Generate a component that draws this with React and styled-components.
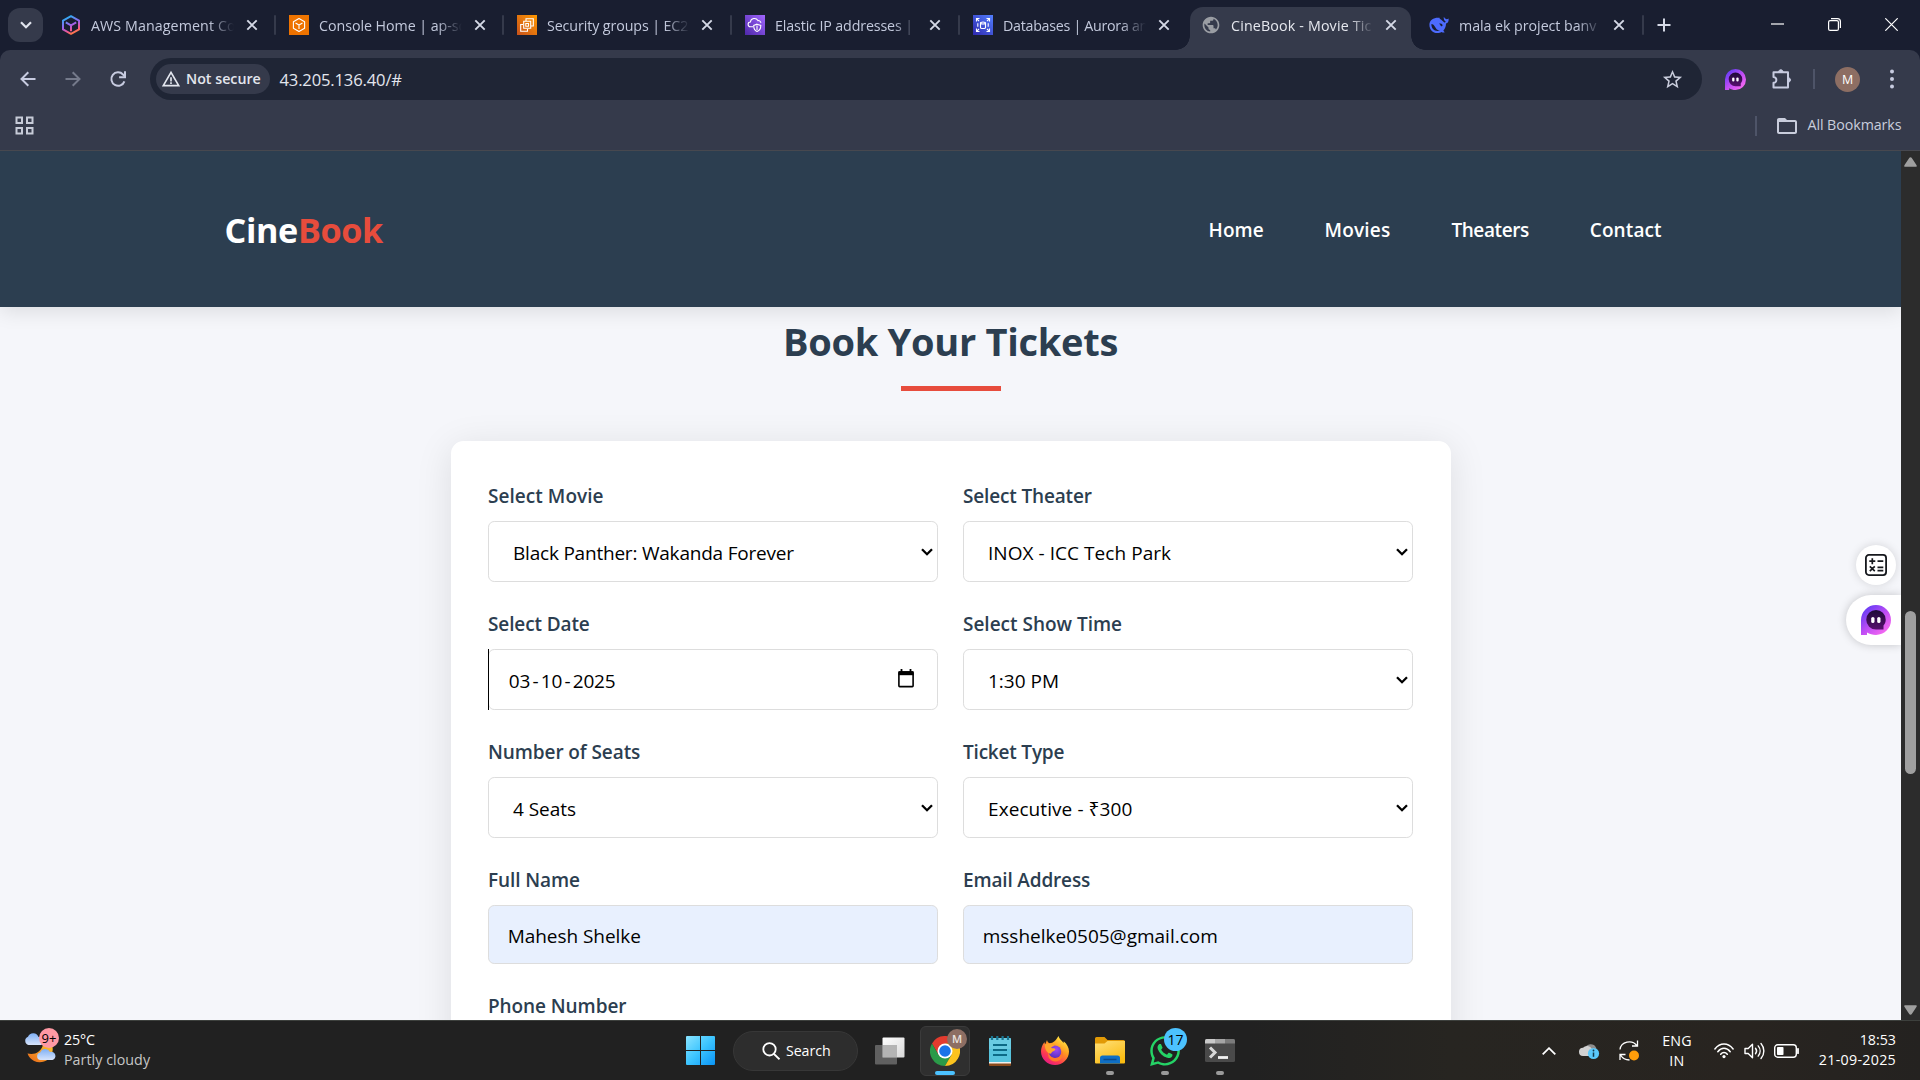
import React from "react";
import styled, { createGlobalStyle, css } from "styled-components";
import {
  MdPublic,
  MdStarBorder,
  MdWarningAmber,
  MdFolderOpen,
} from "react-icons/md";
import { FaWhatsapp } from "react-icons/fa";

const Global = createGlobalStyle`
  *, *::before, *::after { box-sizing: border-box; }
  body {
    margin: 0;
    width: 1920px;
    height: 1080px;
    overflow: hidden;
    font-family: "Open Sans", "Noto Sans", sans-serif;
    background: #191e30;
  }
  svg { display: block; flex: none; }
`;

const Screen = styled.div`
  width: 1920px;
  height: 1080px;
  display: flex;
  flex-direction: column;
`;

/* Every piece of copy can be tracked slightly tighter or looser. */
const Copy = styled.span`
  letter-spacing: ${(p) => p.$ls || 0}px;
  white-space: pre;
`;

/* ---------- Tab strip ---------- */

const TabStrip = styled.div`
  height: 50px;
  background: #191e30;
  display: flex;
  padding-left: 8px;
`;

const TabSearch = styled.div`
  width: 35px;
  height: 34px;
  margin: 8px 5px 0 0;
  border-radius: 12px;
  background: #353a4b;
  display: grid;
  place-items: center;
`;

const TabItem = styled.div`
  position: relative;
  width: 228px;
  height: 50px;
  display: flex;
  align-items: center;
  padding-left: 13px;
  color: ${(p) => (p.$active ? "#e6e8ef" : "#c3c9dc")};
  z-index: 0;

  ${(p) =>
    p.$active &&
    css`
      &::before {
        content: "";
        position: absolute;
        z-index: -1;
        left: 2px;
        right: 5px;
        top: 7px;
        bottom: 0;
        border-radius: 13px 13px 0 0;
        background: #353a4b;
      }
      &::after {
        content: "";
        position: absolute;
        z-index: -1;
        left: -12px;
        right: -9px;
        bottom: 0;
        height: 14px;
        background:
          radial-gradient(circle at 0 0, transparent 13.5px, #353a4b 14px) left / 14px 14px no-repeat,
          radial-gradient(circle at 100% 0, transparent 13.5px, #353a4b 14px) right / 14px 14px no-repeat;
      }
    `}
`;

const TabTitle = styled.div`
  width: 144px;
  margin: 1px 0 0 10px;
  font-size: 14.25px;
  line-height: 22px;
  mask-image: linear-gradient(90deg, #000 118px, transparent 143px);
`;

const TabClose = styled.div`
  width: 20px;
  margin-left: 7px;
  display: grid;
  place-items: center;
`;

const TabDivider = styled.div`
  width: 2px;
  height: 20px;
  margin-left: 13px;
  border-radius: 1px;
  background: ${(p) => (p.$hidden ? "transparent" : "#353a4b")};
`;

const NewTab = styled.div`
  width: 24px;
  display: grid;
  place-items: center;
  margin-left: 8px;
`;

const WindowButtons = styled.div`
  margin-left: auto;
  display: flex;
`;

const WindowButton = styled.div`
  width: 57px;
  height: 49px;
  display: grid;
  place-items: center;
`;

/* ---------- Toolbar ---------- */

const ToolArea = styled.div`
  height: 101px;
  background: #353a4b;
  border-radius: 10px 10px 0 0;
  border-bottom: 1px solid #47484f;
`;

const Toolbar = styled.div`
  height: 58px;
  padding-left: 5px;
  display: flex;
  align-items: center;
`;

const NavButton = styled.div`
  width: 45px;
  display: grid;
  place-items: center;
`;

const Omnibox = styled.div`
  width: 1552px;
  height: 42px;
  margin-left: 10px;
  border-radius: 21px;
  background: #1f2535;
  display: flex;
  align-items: center;
  padding: 0 18px 0 6px;
`;

const SecurityChip = styled.div`
  width: 114px;
  height: 30px;
  border-radius: 15px;
  background: #353a4b;
  display: flex;
  align-items: center;
  gap: 5px;
  padding-left: 5px;
  font-size: 14.25px;
  line-height: 20px;
  font-weight: 600;
  color: #e3e6ee;
`;

const Address = styled.div`
  flex: 1;
  margin: 1px 0 0 9.5px;
  font-size: 16.6px;
  line-height: 24px;
  color: #e3e6ee;
`;

const ToolIcons = styled.div`
  display: flex;
  align-items: center;
  padding-left: 23px;
`;

const PuzzleSlot = styled.div`
  margin: 0 20px 0 25px;
`;

const ToolDivider = styled.div`
  width: 2px;
  height: 20px;
  margin-right: 20px;
  background: #4e5468;
`;

const Avatar = styled.div`
  width: 25px;
  height: 25px;
  border-radius: 50%;
  background: #8d6e63;
  color: #fff;
  font-size: 12.5px;
  line-height: 25px;
  text-align: center;
  margin-right: 26px;
`;

const Bookmarks = styled.div`
  height: 35px;
  display: flex;
  align-items: center;
  padding: 0 18.5px 0 15px;
  color: #c9cddc;
`;

const BookmarkDivider = styled.div`
  width: 2px;
  height: 20px;
  margin: 0 18px 0 auto;
  background: #4e5468;
`;

const BookmarkLabel = styled.div`
  margin: -2px 0 0 8px;
  font-size: 14.25px;
  line-height: 20px;
`;

/* ---------- Page ---------- */

const Viewport = styled.div`
  height: 869px;
  display: flex;
  overflow: hidden;
`;

const Page = styled.div`
  position: relative;
  width: 1901px;
  height: 869px;
  overflow: hidden;
  background: #f5f6fa;
`;

const SiteHeader = styled.header`
  height: 156px;
  background: #2c3e50;
  box-shadow: 0 5px 18.75px rgba(0, 0, 0, 0.1);
  display: flex;
  align-items: center;
  justify-content: space-between;
  padding: 1px 222px 0 224.5px;
`;

const Logo = styled.div`
  font-size: 34.2px;
  line-height: 50px;
  font-weight: 700;
  color: #fff;
`;

const LogoAccent = styled.span`
  color: #e74c3c;
  letter-spacing: -0.4px;
`;

const SiteNav = styled.nav`
  width: 470.5px;
  display: grid;
  grid-template-columns: 116px 126.9px 138.4px auto;
  font-size: 19px;
  font-weight: 600;
  color: #fff;
`;

const Heading = styled.h2`
  margin: 2px 0 12px;
  font-size: 38px;
  line-height: 65px;
  font-weight: 700;
  text-align: center;
  color: #2c3e50;
`;

const HeadingRule = styled.div`
  width: 100px;
  height: 5px;
  margin: 0 auto 50px;
  background: #e74c3c;
`;

const Card = styled.form`
  width: 1000px;
  height: 760px;
  margin: 0 auto;
  padding: 38px 37.5px;
  border-radius: 12.5px;
  background: #fff;
  box-shadow: 0 6.25px 37.5px rgba(0, 0, 0, 0.1);
  display: grid;
  grid-template-columns: 450px 450px;
  column-gap: 25px;
  row-gap: 25px;
  align-content: start;
`;

const Group = styled.div`
  display: flex;
  flex-direction: column;
  gap: 10px;
`;

const Label = styled.label`
  height: 32px;
  font-size: 19px;
  line-height: 34px;
  font-weight: 600;
  color: #2c3e50;
`;

const Control = styled.div`
  position: relative;
  height: ${(p) => (p.$filled ? 59 : 61)}px;
  padding: ${(p) => (p.$select ? "2px 4px 0 24px" : p.$filled ? "2px 4px 0 18.7px" : "2px 4px 0 19.700px")};
  border: 1px solid #ddd;
  border-radius: 6.25px;
  background: ${(p) => (p.$filled ? "#e8f0fe" : "#fff")};
  display: flex;
  align-items: center;
  font-size: 19px;
  line-height: 28px;
  color: #000;
`;

const ControlIcon = styled.div`
  margin: ${(p) => (p.$date ? "-5px 19px 0 auto" : "-2px 0 0 auto")};
`;

const DateDash = styled.span`
  width: 10.3px;
  text-align: center;
`;

const FocusCaret = styled.span`
  position: absolute;
  left: -1px;
  top: -1px;
  width: 1px;
  height: 61px;
  background: #000;
`;

const FloatingTools = styled.div`
  position: absolute;
  right: 0;
  top: 394px;
  display: flex;
  flex-direction: column;
  align-items: flex-end;
  gap: 10px;
`;

const CalcBubble = styled.div`
  width: 40px;
  height: 40px;
  margin-right: 5px;
  border-radius: 50%;
  background: #fff;
  box-shadow: 0 0 10px rgba(0, 0, 0, 0.14);
  display: grid;
  place-items: center;
`;

const AssistantTab = styled.div`
  width: 55px;
  height: 50px;
  padding-left: 15px;
  border-radius: 25px 0 0 25px;
  background: #fff;
  box-shadow: 0 0 10px rgba(0, 0, 0, 0.2);
  display: flex;
  align-items: center;
`;

const Scrollbar = styled.div`
  width: 19px;
  background: #2c2c2c;
  display: flex;
  flex-direction: column;
  align-items: center;
  padding: 6px 0 5px;
`;

const ScrollThumb = styled.div`
  width: 11px;
  height: 163px;
  margin: 444px 0 auto;
  border-radius: 6px;
  background: #9f9f9f;
`;

/* ---------- Taskbar ---------- */

const Taskbar = styled.footer`
  height: 60px;
  border-top: 1px solid #3d403d;
  background: linear-gradient(90deg, #212121 0, #212121 1250px, #272521 1450px, #282420 1750px, #242220);
  display: flex;
  align-items: center;
`;

const Weather = styled.div`
  width: 675px;
  padding-left: 24px;
  display: flex;
  align-items: center;
`;

const WeatherIcon = styled.div`
  position: relative;
  width: 40px;
  height: 40px;
`;

const NewsBadge = styled.span`
  position: absolute;
  left: 15px;
  top: -3px;
  width: 20px;
  height: 20px;
  border-radius: 50%;
  background: #ff99a4;
  color: #000;
  font-size: 13px;
  line-height: 20px;
  text-align: center;
`;

const TwoLines = styled.div`
  display: flex;
  flex-direction: column;
  margin-top: ${(p) => (p.$raised ? -2 : 0)}px;
  font-size: 14.25px;
  line-height: 20px;
  color: #fff;
  align-items: ${(p) => p.$align || "flex-start"};
`;

const Muted = styled(Copy)`
  color: #c6c6c6;
`;

const TaskButton = styled.div`
  position: relative;
  width: 50px;
  height: 50px;
  margin-right: ${(p) => p.$after ?? 5}px;
  border-radius: 6px;
  border: 1px solid ${(p) => (p.$active ? "#3b3b3b" : "transparent")};
  background: ${(p) => (p.$active ? "#2f2f2f" : "transparent")};
  display: grid;
  place-items: center;
`;

const RunMark = styled.span`
  position: absolute;
  left: 50%;
  bottom: 0;
  translate: -50% 0;
  width: ${(p) => (p.$active ? 20 : 8)}px;
  height: 4px;
  border-radius: 2px;
  background: ${(p) => (p.$active ? "#4cc2ff" : "#9a9a9a")};
`;

const CountBadge = styled.span`
  position: absolute;
  right: 2px;
  top: 1px;
  width: 23px;
  height: 23px;
  border-radius: 50%;
  background: #4cc2ff;
  color: #000;
  font-size: 14px;
  line-height: 23px;
  text-align: center;
`;

const ProfileBadge = styled.span`
  position: absolute;
  right: 2px;
  top: 2px;
  width: 20px;
  height: 20px;
  border-radius: 50%;
  background: #8d6e63;
  color: #e9e2df;
  font-size: 11px;
  font-weight: 600;
  line-height: 20px;
  text-align: center;
`;

const SearchPill = styled.div`
  width: 125px;
  height: 40px;
  margin-right: 7px;
  padding-left: 28px;
  border-radius: 20px;
  border: 1px solid #373737;
  background: #2d2d2d;
  display: flex;
  align-items: center;
  gap: 6px;
  color: #fff;
  font-size: 14.25px;
  line-height: 20px;
`;

const Tray = styled.div`
  margin-left: auto;
  padding-right: 24px;
  display: flex;
  align-items: center;
`;

const TrayCell = styled.div`
  width: ${(p) => p.$w}px;
  display: grid;
  place-items: center;
`;

const Clock = styled.div`
  width: 88px;
`;

/* ---------- Icons ---------- */

const Cross = ({ color = "#d5d9e6" }) => (
  <svg width="12" height="12" viewBox="0 0 12 12" stroke={color} strokeWidth="1.9">
    <path d="M1.3 1.3 10.7 10.7M10.7 1.3 1.3 10.7" />
  </svg>
);

const AwsCube = () => (
  <svg width="20" height="20" viewBox="0 0 20 20" fill="none" strokeWidth="2" strokeLinejoin="round">
    <defs>
      <linearGradient id="cube" x1="0.2" y1="0" x2="0.6" y2="1">
        <stop offset="0" stopColor="#1fb6f2" />
        <stop offset="0.5" stopColor="#9a62f0" />
        <stop offset="0.8" stopColor="#f0568f" />
        <stop offset="1" stopColor="#ff7a45" />
      </linearGradient>
    </defs>
    <path stroke="url(#cube)" d="M10 1.2 18 5.6v8.8L10 18.8 2 14.4V5.6ZM4.8 7.4 10 10.3l5.2-2.9M10 10.3v6" />
  </svg>
);

const Tile = ({ id, from, to, children }) => (
  <svg width="20" height="20" viewBox="0 0 20 20" fill="none" stroke="#fff" strokeWidth="1.1">
    <defs>
      <linearGradient id={id} x1="0" y1="1" x2="1" y2="0">
        <stop offset="0" stopColor={from} />
        <stop offset="1" stopColor={to} />
      </linearGradient>
    </defs>
    <rect width="20" height="20" fill={`url(#${id})`} stroke="none" />
    {children}
  </svg>
);

const ConsoleIcon = () => (
  <Tile id="tile-console" from="#ed7100" to="#f07600">
    <path d="M10 3.6 15.6 6.8v6.4L10 16.4 4.4 13.2V6.8ZM6.5 8 10 10l3.5-2M10 10v4" strokeLinejoin="round" />
  </Tile>
);

const Ec2Icon = () => (
  <Tile id="tile-ec2" from="#c8511b" to="#ff9900">
    <path d="M9 6V3.700h7.300V11H14M6.700 6.300h7v7h-7ZM8.800 8.500h2.700v2.700H8.800ZM6 9.500H3.700v6.800h6.800V14" />
  </Tile>
);

const VpcIcon = () => (
  <Tile id="tile-vpc" from="#4d27a8" to="#a166ff">
    <path d="M8 11.8H5.6a2.4 2.4 0 0 1-.2-4.800 4 4 0 0 1 7.500-1.400 2.600 2.600 0 0 1 3 2.300M12 9.200l3.800 1.200c0 3.300-1 5-3.800 6.100-2.500-1.100-3.300-3-3.300-6.100ZM12 10.500v4.500" />
  </Tile>
);

const RdsIcon = () => (
  <Tile id="tile-rds" from="#2e27ad" to="#527fff">
    <path d="M3.500 6.500v-3h3M13.500 3.500h3v3M16.500 13.500v3h-3M6.500 16.500h-3v-3M3.800 3.800l2.200 2.200M16.200 3.800 14 6M16.200 16.200 14 14M3.800 16.200 6 14" />
    <path d="M7.500 8v4.500c0 1.400 5 1.400 5 0V8M4.800 8.200v3.600M15.200 8.200v3.600" />
    <ellipse cx="10" cy="8" rx="2.500" ry="1" />
  </Tile>
);

const WhaleIcon = () => (
  <svg width="20" height="20" viewBox="0 0 20 20" fill="#4d6bfe">
    <path
      fillRule="evenodd"
      d="M19.600 3.400c-1 .9-2.400 1-3.300.2-.7-.6-.9-1.300-1.500-1.600-.3 1.600.2 3.600 1.900 4.500-.4.900-1 1.200-1.700.7C13.500 6.200 12.600 4.500 10.900 4c-.5-.3-.4-.8.2-1.100C6 1.900.400 4.600.400 9.700c0 4.900 3.300 8.300 8 8.300 1.700 0 3-.4 4.100-1.100 1.100.6 2.600.7 3.100.3.1-.3-.6-.7-1.300-1.500 1.900-2 2.700-4.400 2.700-7.100 1.900-.6 2.900-2.400 2.600-5.200ZM10.600 15.300c-2.400.2-3.600-1.800-5-4.100C4.700 9.700 3.600 8.900 2.400 8.900c-.1 4 2.300 7 6.300 7 1 0 1.900-.2 1.900-.6Zm2.700-4.400c-.8.8-1.700.1-1.800-.7-.2-.7-.6-1.100-1.400-1.500 1.200-.6 2.600-.2 3.200.7.3.500.3 1.100 0 1.500Z"
    />
  </svg>
);

const BackArrow = ({ color, flip }) => (
  <svg width="16" height="16" viewBox="0 0 16 16" fill="none" stroke={color} strokeWidth="2" transform={flip ? "scale(-1 1)" : undefined}>
    <path d="M15.500 8H1.800M8.300 1.200 1.500 8l6.800 6.800" />
  </svg>
);

const Reload = () => (
  <svg width="18" height="18" viewBox="0 0 18 18" fill="none" stroke="#c7cbe0" strokeWidth="2">
    <path d="M15.400 11.300A6.700 6.700 0 1 1 14 4.500L16 6.500" />
    <path d="M16 1.300v5.900h-5.900" />
  </svg>
);

const Assistant = ({ size, id }) => (
  <svg width={size} height={size} viewBox="0 0 30 30">
    <defs>
      <linearGradient id={id} x1="0" y1="0.100" x2="0.800" y2="1">
        <stop offset="0.100" stopColor="#6b3df5" />
        <stop offset="0.550" stopColor="#c04df5" />
        <stop offset="1" stopColor="#fb6cf0" />
      </linearGradient>
      <linearGradient id={`${id}-in`} x1="0" y1="0" x2="0" y2="1">
        <stop offset="0" stopColor="#1d0a38" />
        <stop offset="1" stopColor="#58106e" />
      </linearGradient>
    </defs>
    <path fill={`url(#${id})`} d="M0 30V15A15 15 0 1 1 15 30c-3.500 0-6.500-.900-9-2.500V30Z" />
    <path fill={`url(#${id}-in)`} d="M15 5a9.700 9.700 0 0 1 9.700 9.700c0 2.300-.900 4.200-2.200 5.800v4H15A9.700 9.700 0 0 1 15 5Z" />
    <rect x="10.200" y="12" width="3.300" height="6" rx="1.600" fill="#fff" />
    <rect x="16.200" y="12" width="3.300" height="6" rx="1.600" fill="#fff" />
  </svg>
);

const Puzzle = () => (
  <svg width="22" height="22" viewBox="0 0 22 22" fill="none" stroke="#c7cbe0" strokeWidth="2" strokeLinejoin="round">
    <path d="M2.500 4.300H17v15.200H2.500v-4.700c3.200.500 4.300-5.400 0-5.800Z" />
    <path d="M7.500 4.300c0-3.400 4.700-3.400 4.700 0ZM17 9.700c3.400 0 3.400 4.500 0 4.500Z" fill="#c7cbe0" strokeWidth="1" />
  </svg>
);

const AppsGrid = () => (
  <svg width="19" height="19" viewBox="0 0 19 19" fill="none" stroke="#c7cbd8" strokeWidth="2">
    <path d="M1.500 1.500h5.500v5.500h-5.500ZM12 1.500h5.500v5.500H12ZM1.500 12h5.500v5.500h-5.500ZM12 12h5.500v5.500H12Z" />
  </svg>
);

const SelectArrow = () => (
  <svg width="12" height="8" viewBox="0 0 12 8" fill="none" stroke="#000" strokeWidth="2.300">
    <path d="M1 1.200 6 6.200l5-5" />
  </svg>
);

const Calendar = () => (
  <svg width="16" height="19" viewBox="0 0 16 19" fill="none" stroke="#000">
    <rect x="0.900" y="3" width="14.200" height="14.600" rx="0.800" strokeWidth="1.600" />
    <path d="M.5 4.200h15" strokeWidth="4" />
    <path d="M3.500 0v3M12.500 0v3" strokeWidth="1.800" />
  </svg>
);

const CalcIcon = () => (
  <svg width="22" height="22" viewBox="0 0 22 22" fill="none" stroke="#16181d" strokeWidth="1.700">
    <rect x="0.900" y="0.900" width="20.200" height="20.200" rx="3" strokeWidth="1.800" />
    <path d="M4.300 7.200h6M7.300 4.200v6M12.500 7.200h5.800M4.800 12.300l5 4.800M9.800 12.300l-5 4.800M12.500 13.300h5.800M12.500 16.600h5.800" />
  </svg>
);

const ScrollArrow = ({ down }) => (
  <svg width="13" height="10" viewBox="0 0 13 10" fill="#9f9f9f" transform={down ? "scale(1 -1)" : undefined}>
    <path d="M5.200 1c.6-1 2-1 2.600 0l4.800 7.200c.4.900.1 1.600-.8 1.600H1.200c-.9 0-1.200-.7-.8-1.600Z" />
  </svg>
);

const CloudMoon = () => (
  <svg width="36" height="32" viewBox="0 0 36 32">
    <defs>
      <linearGradient id="cloud" x1="0" y1="0" x2="0" y2="1">
        <stop offset="0" stopColor="#7fb0f5" />
        <stop offset="1" stopColor="#d7e4fb" />
      </linearGradient>
      <linearGradient id="moon" x1="1" y1="0" x2="0" y2="1">
        <stop offset="0" stopColor="#ffc52e" />
        <stop offset="1" stopColor="#e8661a" />
      </linearGradient>
    </defs>
    <path fill="url(#cloud)" d="M4.500 14A4.300 4.300 0 0 1 4 5.800 5.600 5.600 0 0 1 14.500 6 4 4 0 0 1 17 14Z" />
    <path fill="url(#moon)" d="M28 14a12.500 12.500 0 0 1-24.500 8.500c7 1.700 13-1 15.500-8.500Z" />
    <path fill="url(#cloud)" d="M16.500 29a3.800 3.800 0 0 1-.3-7.500A5.400 5.400 0 0 1 26 21a4 4 0 0 1 2.500 8Z" />
  </svg>
);

const WindowsLogo = () => (
  <svg width="29" height="29" viewBox="0 0 29 29">
    <defs>
      <linearGradient id="win" x1="0" y1="0" x2="1" y2="1">
        <stop offset="0" stopColor="#8ae4ff" />
        <stop offset="0.500" stopColor="#3cc4ff" />
        <stop offset="1" stopColor="#0a94f5" />
      </linearGradient>
    </defs>
    <path fill="url(#win)" d="M1 0h13v14H0V1q0-1 1-1ZM15 0h13q1 0 1 1v13H15ZM0 15h14v14H1q-1 0-1-1ZM15 15h14v13q0 1-1 1H15Z" />
  </svg>
);

const TaskView = () => (
  <svg width="30" height="28" viewBox="0 0 30 28">
    <defs>
      <linearGradient id="tv" x1="0" y1="0" x2="1" y2="1">
        <stop offset="0" stopColor="#fff" />
        <stop offset="1" stopColor="#d9d9d9" />
      </linearGradient>
    </defs>
    <rect x="7.500" y="0.500" width="22" height="20" rx="1" fill="url(#tv)" />
    <rect x="0" y="8" width="22" height="19.500" rx="1" fill="#6b6b6b" fillOpacity="0.850" />
    <path d="M7.500 8H22v12.500H7.500Z" fill="#b4b4b4" />
  </svg>
);

const Chrome = () => (
  <svg width="30" height="30" viewBox="0 0 48 48">
    <path fill="#e33b2e" d="M3.200 12A24 24 0 0 1 44.800 12H24L13.600 30Z" />
    <path fill="#2a9a48" d="M3.200 12 13.600 30h20.800L24 48A24 24 0 0 1 3.200 12Z" />
    <path fill="#fcc31e" d="M44.800 12A24 24 0 0 1 24 48L34.400 30 24 12Z" />
    <circle cx="24" cy="24" r="12" fill="#fff" />
    <circle cx="24" cy="24" r="9.300" fill="#1a73e8" />
  </svg>
);

const Notepad = () => (
  <svg width="22" height="30" viewBox="0 0 22 30">
    <rect y="25" width="22" height="5" rx="1" fill="#8a4a1c" />
    <rect y="24" width="22" height="3.500" fill="#f1eeea" />
    <path d="M0 3q0-1 1-1h20q1 0 1 1v23H0Z" fill="#56c3dd" />
    <path d="M0 3q0-1 1-1h20q1 0 1 1v10H0Z" fill="#7bd6ea" fillOpacity="0.500" />
    <path d="M4 9h14M4 14h14M4 19h14" stroke="#0c6a86" strokeWidth="1.800" />
    <path d="M3 0v4M8.300 0v4M13.600 0v4M19 0v4" stroke="#1b7793" strokeWidth="2.200" />
  </svg>
);

const Firefox = () => (
  <svg width="28" height="29" viewBox="0 0 28 29">
    <defs>
      <linearGradient id="fx" x1="0.850" y1="0.050" x2="0.250" y2="1">
        <stop offset="0" stopColor="#fff04a" />
        <stop offset="0.400" stopColor="#ff9a1f" />
        <stop offset="0.750" stopColor="#ff3a50" />
        <stop offset="1" stopColor="#e2178a" />
      </linearGradient>
      <radialGradient id="fxg" cx="0.600" cy="0.300" r="0.700">
        <stop offset="0" stopColor="#a04bf5" />
        <stop offset="1" stopColor="#5a2fc0" />
      </radialGradient>
    </defs>
    <path fill="url(#fx)" d="M17.500 0c.6 3 3.500 4.500 5 7 .3-.6.300-1.200.2-1.700C26.200 8.300 28 12 28 15.500 28 23 21.800 29 14 29S0 23 0 15.500C0 11.800 1.300 8.600 3.600 5.900c0 1 .1 1.700.6 2.300L6 4c.4 1.700 1.200 2.800 2.600 3.300C12.500 7 14.800 4.500 17.500 0Z" />
    <circle cx="14" cy="15.800" r="6.300" fill="url(#fxg)" />
    <path fill="#ffa62b" d="M3.800 8.500c3-1.500 6.500-1.300 9.700 1.400-1.900.1-3 1-3.300 2.200 2 .3 4 .2 4.300 1.300-.4 1.300-2.600 1.700-3.800 2.900-.3 2-1.600 1.500-3.500.8C4.400 14.500 3.800 11.500 3.800 8.500Z" />
    <path fill="#ff7a2a" d="M20.500 14c1.200 5-3 9-8 7.800-2.500-.6-4.300-2.500-5-5-1.600 4.500 2.500 9.200 7.500 8.700 6-.6 8.500-7 5.500-11.500Z" />
  </svg>
);

const Explorer = () => (
  <svg width="30" height="27" viewBox="0 0 30 27">
    <defs>
      <linearGradient id="fold" x1="0" y1="0" x2="0.600" y2="1">
        <stop offset="0" stopColor="#ffe07a" />
        <stop offset="1" stopColor="#fbbc12" />
      </linearGradient>
    </defs>
    <path fill="#e29a06" d="M0 1.500Q0 0 1.500 0h8l3 3H28.500Q30 3 30 4.500V12H0Z" />
    <path fill="url(#fold)" d="M0 6.500h9.500l3-2.500H30v21.500q0 1-1 1H1q-1 0-1-1Z" />
    <path fill="#0f6fc5" d="M5 21q0-2.500 2.500-2.500h15Q25 18.500 25 21v5.500H5Z" />
    <path d="M8.500 22.500h13" stroke="#0a4a8e" strokeWidth="1.500" />
  </svg>
);

const Terminal = () => (
  <svg width="30" height="23" viewBox="0 0 30 23">
    <rect width="30" height="23" rx="1.500" fill="#4a4a4a" />
    <path d="M0 4.500V1.500Q0 0 1.500 0h8.500v4.500H0Z" fill="#c9c9c9" />
    <path d="M10 0h10v4.500H10Z" fill="#a5a5a5" />
    <path d="M20 0h8.500Q30 0 30 1.500v3H20Z" fill="#7b7b7b" />
    <path d="M5 8.500 10 13.500 5 18.500" fill="none" stroke="#d8d8d8" strokeWidth="3" />
    <path d="M13 18.500h10" stroke="#f2f2f2" strokeWidth="2.800" />
  </svg>
);

const OneDrive = () => (
  <svg width="21" height="18" viewBox="0 0 21 18">
    <path fill="#8e8e8e" d="M6 6.500a6 6 0 0 1 11-1l2 6H9Z" />
    <path fill="#d2d2d2" d="M4.200 14A4.100 4.100 0 0 1 4 5.800 5.500 5.500 0 0 1 13 7l4 7Z" />
    <circle cx="14.500" cy="11.500" r="5.600" fill="#5ac8fa" />
    <path d="M14.500 10.500v4.300" stroke="#14384a" strokeWidth="1.500" />
    <circle cx="14.500" cy="8.500" r="0.900" fill="#14384a" />
  </svg>
);

const SyncIcon = () => (
  <svg width="20" height="21" viewBox="0 0 20 21" fill="none" stroke="#fff" strokeWidth="1.300">
    <path d="M1 9.500C2 1.500 13-.8 17.800 5.500M18.500.500v5.500h-5.500M1 20v-5.500h5.500M1.500 15c2 3.300 5 4.900 9 5" />
    <circle cx="15" cy="15.500" r="5" fill="#ff9d0a" stroke="none" />
  </svg>
);

const Wifi = () => (
  <svg width="20" height="16" viewBox="0 0 20 16" fill="none" stroke="#fff" strokeWidth="1.500" strokeLinecap="round">
    <path d="M.9 6C6-.6 14-.6 19.100 6M3.800 8.700c3.500-4.500 8.900-4.500 12.400 0M6.700 11.300c1.900-2.300 4.700-2.300 6.600 0" />
    <circle cx="10" cy="13.600" r="1.600" fill="#fff" stroke="none" />
  </svg>
);

const Volume = () => (
  <svg width="21" height="18" viewBox="0 0 21 18" fill="none" stroke="#fff" strokeWidth="1.400" strokeLinecap="round" strokeLinejoin="round">
    <path d="M1 6.500h3.200L8.500 2.200v13.600L4.200 11.500H1ZM11.500 6.300c1.300 1.600 1.300 3.800 0 5.400M14.200 3.900c2.500 3 2.500 7.200 0 10.200M17 1.500c3.800 4.400 3.800 10.600 0 15" />
  </svg>
);

const Battery = () => (
  <svg width="25" height="14" viewBox="0 0 25 14" fill="none" stroke="#fff" strokeWidth="1.400">
    <rect x="0.700" y="0.800" width="21.600" height="12.400" rx="3" />
    <rect x="3" y="3" width="6.500" height="8" rx="0.800" fill="#fff" stroke="none" />
    <path d="M24 4.800v4.400" strokeWidth="1.800" strokeLinecap="round" />
  </svg>
);

/* ---------- Data ---------- */

const TABS = [
  { title: "AWS Management Co", ls: 0.09, icon: <AwsCube /> },
  { title: "Console Home | ap-so", ls: -0.05, icon: <ConsoleIcon /> },
  { title: "Security groups | EC2", ls: -0.1, icon: <Ec2Icon /> },
  { title: "Elastic IP addresses |", ls: -0.13, icon: <VpcIcon /> },
  { title: "Databases | Aurora an", ls: -0.28, icon: <RdsIcon />, last: true },
  { title: "CineBook - Movie Tic", ls: 0.16, icon: <MdPublic size={20} color="#9a9da3" />, active: true, last: true },
  { title: "mala ek project banv", ls: -0.05, icon: <WhaleIcon /> },
];

const LINKS = [
  ["Home", 0.1],
  ["Movies", 0.2],
  ["Theaters", -0.41],
  ["Contact", 0.1],
];

const FIELDS = [
  { label: "Select Movie", ls: 0.05, value: "Black Panther: Wakanda Forever", vls: -0.21, select: true },
  { label: "Select Theater", ls: -0.16, value: "INOX - ICC Tech Park", vls: 0.05, select: true },
  { label: "Select Date", ls: -0.12, date: ["03", "10", "2025"] },
  { label: "Select Show Time", ls: -0.01, value: "1:30 PM", select: true },
  { label: "Number of Seats", ls: -0.09, value: "4 Seats", vls: -0.04, select: true },
  { label: "Ticket Type", ls: -0.2, value: "Executive - ₹300", vls: 0.08, select: true },
  { label: "Full Name", ls: -0.09, value: "Mahesh Shelke", vls: -0.05, filled: true },
  { label: "Email Address", ls: -0.16, value: "msshelke0505@gmail.com", filled: true },
  { label: "Phone Number", ls: -0.08 },
];

function Tab({ tab }) {
  return (
    <TabItem $active={tab.active}>
      {tab.icon}
      <TabTitle>
        <Copy $ls={tab.ls}>{tab.title}</Copy>
      </TabTitle>
      <TabClose>
        <Cross />
      </TabClose>
      <TabDivider $hidden={tab.last} />
    </TabItem>
  );
}

function Field({ field }) {
  const { label, ls, value, vls, select, filled, date } = field;
  return (
    <Group>
      <Label>
        <Copy $ls={ls}>{label}</Copy>
      </Label>
      {value && (
        <Control $select={select} $filled={filled}>
          <Copy $ls={vls}>{value}</Copy>
          {select && (
            <ControlIcon>
              <SelectArrow />
            </ControlIcon>
          )}
        </Control>
      )}
      {date && (
        <Control>
          <FocusCaret />
          <Copy>{date[0]}</Copy>
          <DateDash>-</DateDash>
          <Copy>{date[1]}</Copy>
          <DateDash>-</DateDash>
          <Copy $ls={-0.2}>{date[2]}</Copy>
          <ControlIcon $date>
            <Calendar />
          </ControlIcon>
        </Control>
      )}
    </Group>
  );
}

export default function App() {
  return (
    <Screen>
      <Global />
      <TabStrip>
        <TabSearch>
          <svg width="12" height="8" viewBox="0 0 12 8" fill="none" stroke="#e1e4ee" strokeWidth="2.200">
            <path d="M1 1.200 6 6.200l5-5" />
          </svg>
        </TabSearch>
        {TABS.map((tab) => (
          <Tab key={tab.title} tab={tab} />
        ))}
        <NewTab>
          <svg width="14" height="14" viewBox="0 0 14 14" stroke="#d5d9e6" strokeWidth="2">
            <path d="M7 .500v13M.500 7h13" />
          </svg>
        </NewTab>
        <WindowButtons>
          <WindowButton>
            <svg width="13" height="13" viewBox="0 0 13 13" stroke="#fff" strokeWidth="1.200">
              <path d="M0 6h13" />
            </svg>
          </WindowButton>
          <WindowButton>
            <svg width="13" height="13" viewBox="0 0 13 13" fill="none" stroke="#fff" strokeWidth="1.200">
              <rect x="0.600" y="2.600" width="9.800" height="9.800" rx="1.500" />
              <path d="M3 .600h6.500q2.900 0 2.900 2.900V10" />
            </svg>
          </WindowButton>
          <WindowButton>
            <svg width="13" height="13" viewBox="0 0 13 13" stroke="#fff" strokeWidth="1.200">
              <path d="M.300.300l12.400 12.400M12.700.300.300 12.700" />
            </svg>
          </WindowButton>
        </WindowButtons>
      </TabStrip>

      <ToolArea>
        <Toolbar>
          <NavButton>
            <BackArrow color="#c7cbe0" />
          </NavButton>
          <NavButton>
            <BackArrow color="#757a8b" flip />
          </NavButton>
          <NavButton>
            <Reload />
          </NavButton>
          <Omnibox>
            <SecurityChip>
              <MdWarningAmber size={20} />
              <Copy>Not secure</Copy>
            </SecurityChip>
            <Address>
              <Copy $ls={-0.16}>43.205.136.40/#</Copy>
            </Address>
            <MdStarBorder size={23} color="#c9cddc" />
          </Omnibox>
          <ToolIcons>
            <Assistant size={21} id="ext" />
            <PuzzleSlot>
              <Puzzle />
            </PuzzleSlot>
            <ToolDivider />
            <Avatar>M</Avatar>
            <svg width="12" height="20" viewBox="0 0 12 20" fill="#c7cbe0">
              <circle cx="6" cy="2.500" r="2" />
              <circle cx="6" cy="10" r="2" />
              <circle cx="6" cy="17.500" r="2" />
            </svg>
          </ToolIcons>
        </Toolbar>
        <Bookmarks>
          <AppsGrid />
          <BookmarkDivider />
          <MdFolderOpen size={24} />
          <BookmarkLabel>
            <Copy $ls={-0.07}>All Bookmarks</Copy>
          </BookmarkLabel>
        </Bookmarks>
      </ToolArea>

      <Viewport>
        <Page>
          <SiteHeader>
            <Logo>
              <Copy $ls={-0.36}>Cine</Copy>
              <LogoAccent>Book</LogoAccent>
            </Logo>
            <SiteNav>
              {LINKS.map(([name, ls]) => (
                <Copy key={name} $ls={ls}>
                  {name}
                </Copy>
              ))}
            </SiteNav>
          </SiteHeader>
          <Heading>
            <Copy $ls={-0.28}>Book Your Tickets</Copy>
          </Heading>
          <HeadingRule />
          <Card>
            {FIELDS.map((field) => (
              <Field key={field.label} field={field} />
            ))}
          </Card>
          <FloatingTools>
            <CalcBubble>
              <CalcIcon />
            </CalcBubble>
            <AssistantTab>
              <Assistant size={30} id="side" />
            </AssistantTab>
          </FloatingTools>
        </Page>
        <Scrollbar>
          <ScrollArrow />
          <ScrollThumb />
          <ScrollArrow down />
        </Scrollbar>
      </Viewport>

      <Taskbar>
        <Weather>
          <WeatherIcon>
            <CloudMoon />
            <NewsBadge>9+</NewsBadge>
          </WeatherIcon>
          <TwoLines $raised>
            <Copy $ls={-0.1}>25°C</Copy>
            <Muted $ls={0.05}>Partly cloudy</Muted>
          </TwoLines>
        </Weather>
        <TaskButton $after={8}>
          <WindowsLogo />
        </TaskButton>
        <SearchPill>
          <svg width="18" height="18" viewBox="0 0 18 18" fill="none" stroke="#fff" strokeWidth="1.800">
            <circle cx="7.500" cy="7.300" r="6.200" />
            <path d="M12 12l5.500 5.300" />
          </svg>
          <Copy $ls={-0.1}>Search</Copy>
        </SearchPill>
        <TaskButton>
          <TaskView />
        </TaskButton>
        <TaskButton $active>
          <Chrome />
          <ProfileBadge>M</ProfileBadge>
          <RunMark $active />
        </TaskButton>
        <TaskButton>
          <Notepad />
        </TaskButton>
        <TaskButton>
          <Firefox />
        </TaskButton>
        <TaskButton>
          <Explorer />
          <RunMark />
        </TaskButton>
        <TaskButton>
          <FaWhatsapp size={34} color="#25d366" />
          <CountBadge>17</CountBadge>
          <RunMark />
        </TaskButton>
        <TaskButton>
          <Terminal />
          <RunMark />
        </TaskButton>
        <Tray>
          <TrayCell $w={40}>
            <svg width="14" height="8" viewBox="0 0 14 8" fill="none" stroke="#fff" strokeWidth="1.800">
              <path d="M.700 7.300 7 1.200l6.300 6.100" />
            </svg>
          </TrayCell>
          <TrayCell $w={40}>
            <OneDrive />
          </TrayCell>
          <TrayCell $w={40}>
            <SyncIcon />
          </TrayCell>
          <TrayCell $w={56}>
            <TwoLines $align="center">
              <Copy $ls={0.18}>ENG</Copy>
              <Copy $ls={0.4}>IN</Copy>
            </TwoLines>
          </TrayCell>
          <TrayCell $w={38}>
            <Wifi />
          </TrayCell>
          <TrayCell $w={22}>
            <Volume />
          </TrayCell>
          <TrayCell $w={43}>
            <Battery />
          </TrayCell>
          <Clock>
            <TwoLines $align="flex-end" $raised>
              <Copy>18:53</Copy>
              <Copy $ls={0.28}>21-09-2025</Copy>
            </TwoLines>
          </Clock>
        </Tray>
      </Taskbar>
    </Screen>
  );
}
